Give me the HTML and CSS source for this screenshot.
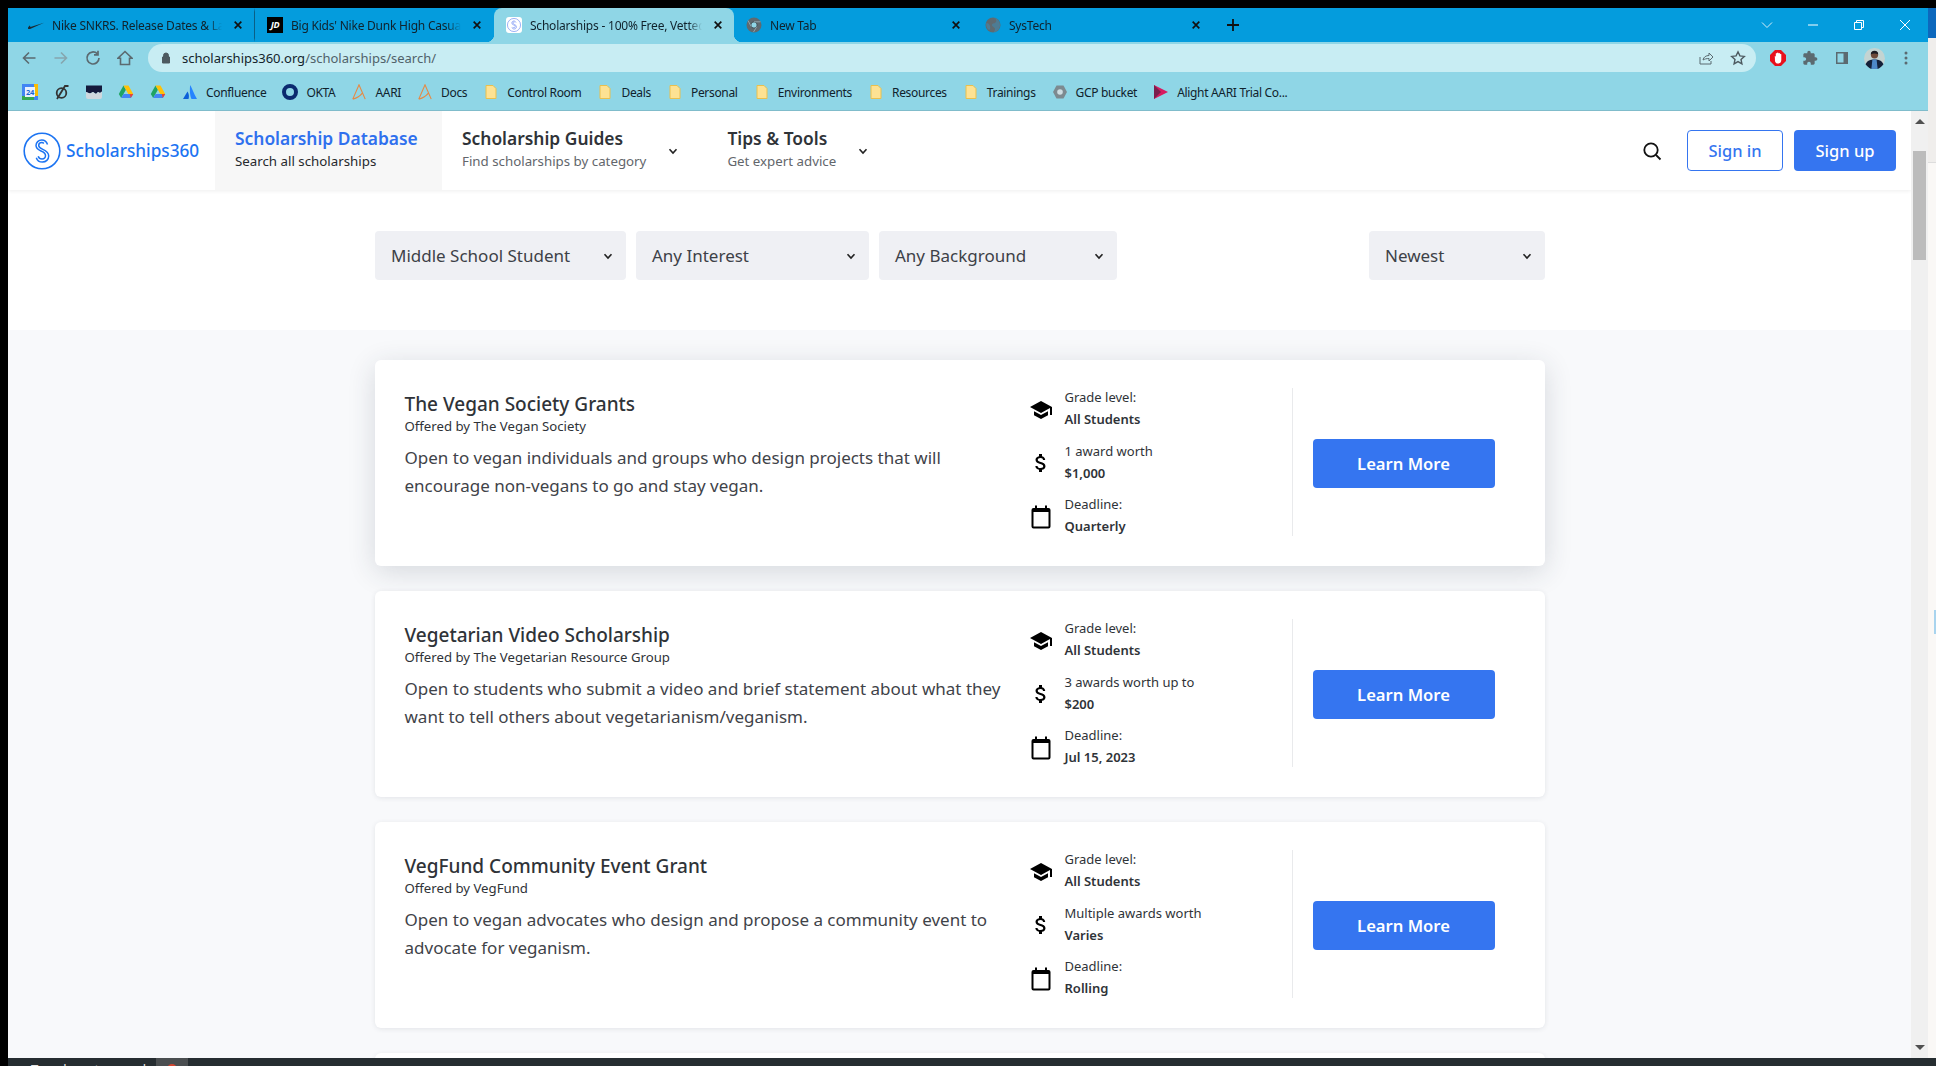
FILE: index.html
```html
<!DOCTYPE html>
<html lang="en">
<head>
  <meta charset="UTF-8" />
  <title>Scholarships - 100% Free, Vetted</title>
  <link rel="stylesheet" href="styles.css">
</head>
<body>

<svg class="defs" width="0" height="0" aria-hidden="true">
  <symbol id="i-close" viewBox="0 0 12 12"><path d="M2 2l8 8M10 2l-8 8" fill="none" stroke="currentColor" stroke-width="2"/></symbol>
  <symbol id="i-chev" viewBox="0 0 12 12"><path d="M2.500 4.200L6 8l3.500-3.800" fill="none" stroke="currentColor" stroke-width="1.600"/></symbol>
  <symbol id="i-folder" viewBox="0 0 16 16"><path d="M3 1.500h7l3 3v10H3z" fill="#fde293" stroke="#e9c04e" stroke-width="1"/></symbol>
  <symbol id="i-drive" viewBox="0 0 16 16"><path d="M5.500 1.500L.8 10l2.400 4 4.700-8.200z" fill="#1fa463"/><path d="M5.500 1.500h5l4.700 8.500H10.300z" fill="#ffc107"/><path d="M3.200 14h9.600l2.400-4H5.500z" fill="#4285f4"/><path d="M12.800 14l2.400-4h-3.500z" fill="#ea4335"/></symbol>
  <symbol id="i-aari" viewBox="0 0 16 18"><path d="M1 17L8 1l7 16M1 17c4-1 8-3 11-7" fill="none" stroke="#e58a45" stroke-width="1.300"/></symbol>
  <symbol id="i-s" viewBox="0 0 38 38"><circle cx="19" cy="19" r="17.800" fill="none" stroke="currentColor" stroke-width="1.600"/><path d="M24.500 12.500c-1-3-3.200-4.500-5.700-4.500-3.300 0-5.800 2.500-5.800 5.600 0 6.500 9.500 4.200 9.500 10 0 1.900-1.500 3.400-3.500 3.400-1.800 0-3.200-1-3.800-2.800M20.800 11.500c-.5-.7-1.200-1-2-1-1.800 0-3.100 1.300-3.100 3 0 4.700 10 3.100 10 10.600 0 3.500-2.800 6-6.200 6-2.900 0-5.300-1.600-6.200-4.400" fill="none" stroke="currentColor" stroke-width="1.500"/></symbol>
  <symbol id="i-school" viewBox="0 0 24 24"><path d="M5 13.180v4L12 21l7-3.820v-4L12 17l-7-3.820zM12 3L1 9l11 6 9-4.910V17h2V9L12 3z"/></symbol>
  <symbol id="i-money" viewBox="0 0 24 24"><path d="M11.800 10.900c-2.270-.59-3-1.200-3-2.150 0-1.090 1.010-1.850 2.700-1.850 1.780 0 2.440.85 2.500 2.100h2.210c-.07-1.720-1.120-3.300-3.210-3.810V3h-3v2.160c-1.940.42-3.500 1.680-3.500 3.610 0 2.310 1.910 3.460 4.700 4.130 2.500.6 3 1.480 3 2.410 0 .69-.49 1.790-2.700 1.790-2.060 0-2.870-.92-2.980-2.100h-2.200c.12 2.190 1.760 3.420 3.680 3.830V21h3v-2.150c1.950-.37 3.500-1.500 3.500-3.550 0-2.840-2.430-3.810-4.700-4.400z"/></symbol>
  <symbol id="i-cal" viewBox="0 0 24 24"><path d="M19.500 3H18V.5h-2V3H8V.5H6V3H4.500a2 2 0 0 0-2 2v16.500a2 2 0 0 0 2 2h15a2 2 0 0 0 2-2V5a2 2 0 0 0-2-2zm0 18.500h-15V7h15z"/></symbol>
</svg>

<div class="desktop">
  <div class="window">

    <div class="tabstrip">
      <div class="tab">
        <svg class="fav" viewBox="0 0 16 16"><path d="M0 11c-.2 1 .8 1.300 2 .9L16 5.800 4 9.600c-1.700.5-2.400-.1-1.900-1.400C.8 9.200.2 10.100 0 11z" fill="#1c2b33"/></svg>
        <span class="tab-title">Nike SNKRS. Release Dates &amp; Lau</span>
        <svg class="tab-x"><use href="#i-close"/></svg>
      </div>
      <div class="tab">
        <span class="fav jd">JD</span>
        <span class="tab-title">Big Kids' Nike Dunk High Casual</span>
        <svg class="tab-x"><use href="#i-close"/></svg>
      </div>
      <div class="tab active">
        <span class="fav fav-s"><svg width="14" height="14"><use href="#i-s"/></svg></span>
        <span class="tab-title">Scholarships - 100% Free, Vetted</span>
        <svg class="tab-x"><use href="#i-close"/></svg>
      </div>
      <div class="tab">
        <svg class="fav" viewBox="0 0 16 16"><circle cx="8" cy="8" r="7.500" fill="#5f6a70"/><circle cx="8" cy="8" r="3.200" fill="#8fd6e6" stroke="#3f4a50" stroke-width="1"/><path d="M8 4.800h6.500M5.200 9.600L2 3.500M10.800 9.600L7.500 15" stroke="#8fa3ac" stroke-width="1"/></svg>
        <span class="tab-title">New Tab</span>
        <svg class="tab-x"><use href="#i-close"/></svg>
      </div>
      <div class="tab">
        <svg class="fav" viewBox="0 0 16 16"><circle cx="8" cy="8" r="7.500" fill="#5f6a70"/><path d="M9 1c2.500 1 3 3 1.500 4.500S7 6 7 8s3 2 3 4-1 3-2 3.500c4-.2 7-3.500 7-7.500 0-3.400-2.500-6.400-6-7zM1.500 6c1.500 0 3 1 3.500 3s.5 3-1 4C2.300 11.700.5 9 1.500 6z" fill="#2f9fd8" opacity=".35"/></svg>
        <span class="tab-title">SysTech</span>
        <svg class="tab-x"><use href="#i-close"/></svg>
      </div>
      <svg class="new-tab" viewBox="0 0 12 12"><path d="M6 0v12M0 6h12" stroke="#111" stroke-width="1.800"/></svg>
      <div class="win-ctrls">
        <svg viewBox="0 0 12 12"><path d="M1 3.500l5 5 5-5" fill="none" stroke="#d8eef8" stroke-width="1"/></svg>
        <svg viewBox="0 0 12 12"><path d="M1 6h10" stroke="#fff" stroke-width="1"/></svg>
        <svg viewBox="0 0 12 12"><path d="M1.500 3.500h7v7h-7zM3.500 3.500v-2h7v7h-2" fill="none" stroke="#fff" stroke-width="1"/></svg>
        <svg viewBox="0 0 12 12"><path d="M1 1l10 10M11 1L1 11" stroke="#fff" stroke-width="1"/></svg>
      </div>
    </div>

    <div class="toolbar">
      <button class="tool"><svg viewBox="0 0 16 16"><path d="M14.500 8H2.500M8 2.500L2.500 8 8 13.500" fill="none" stroke="#5b6a70" stroke-width="1.600"/></svg></button>
      <button class="tool"><svg viewBox="0 0 16 16"><path d="M1.500 8h12M8 2.500L13.500 8 8 13.500" fill="none" stroke="#86a5ae" stroke-width="1.600"/></svg></button>
      <button class="tool"><svg viewBox="0 0 16 16"><path d="M14 8a6 6 0 1 1-1.800-4.300M13 .8v4H9" fill="none" stroke="#5b6a70" stroke-width="1.700"/></svg></button>
      <button class="tool"><svg viewBox="0 0 16 16"><path d="M8 1.500L1 8.200h2.500v6.300h9V8.200H15z" fill="none" stroke="#5b6a70" stroke-width="1.600"/></svg></button>
      <div class="omnibox">
        <svg class="lock" viewBox="0 0 12 12"><path d="M3.500 5V3.500a2.500 2.500 0 0 1 5 0V5M2.500 5h7v6h-7z" fill="#4d5a60" stroke="#4d5a60"/></svg>
        <span class="url"><b>scholarships360.org</b>/scholarships/search/</span>
        <button class="tool"><svg viewBox="0 0 16 16"><path d="M2 7v7h11v-3M5 10c.5-3 3-4.500 6-4.500V3l4 4-4 4V8.500C8.500 8.500 6.500 9 5 10z" fill="none" stroke="#5b6a70" stroke-width="1"/></svg></button>
        <button class="tool"><svg viewBox="0 0 16 16"><path d="M8 1.800l1.900 4.100 4.400.5-3.300 3 .9 4.400L8 11.600l-3.900 2.200.9-4.400-3.300-3 4.400-.5z" fill="none" stroke="#4d5a60" stroke-width="1.400"/></svg></button>
      </div>
      <div class="tool-end">
        <button class="tool"><svg viewBox="0 0 16 16"><path d="M5 0h6l5 5v6l-5 5H5l-5-5V5z" fill="#e8101c"/><path d="M4.800 6l1 .5V3.500a.7.7 0 0 1 1.200 0V3a.8.8 0 0 1 1.500 0v.4a.8.8 0 0 1 1.500 0v.8a.7.7 0 0 1 1.300 0V10c0 2.300-1.400 3.600-3.300 3.600-1.600 0-2.500-.9-3-2.300z" fill="#fff"/></svg></button>
        <button class="tool"><svg viewBox="0 0 24 24"><path d="M20.500 11H19V7c0-1.100-.9-2-2-2h-4V3.500C13 2.120 11.880 1 10.500 1S8 2.120 8 3.500V5H4c-1.100 0-1.990.9-1.990 2v3.800H3.500c1.490 0 2.700 1.210 2.700 2.700s-1.210 2.700-2.700 2.700H2V20c0 1.100.9 2 2 2h3.800v-1.500c0-1.490 1.210-2.700 2.700-2.700 1.490 0 2.700 1.210 2.700 2.700V22H17c1.100 0 2-.9 2-2v-4h1.500c1.380 0 2.500-1.120 2.500-2.500S21.880 11 20.500 11z" fill="#5b6a70"/></svg></button>
        <button class="tool"><svg viewBox="0 0 16 16"><path d="M2 2h12v12H2z" fill="#5b6a70"/><path d="M3.500 3.500h6v9h-6z" fill="#8fd6e6"/></svg></button>
        <button class="tool"><svg class="avatar" viewBox="0 0 20 20"><circle cx="10" cy="10" r="10" fill="#c4d4d2"/><path d="M1.500 15.500C3 12 6 11 10 11s7 1 8.500 4.500a10 10 0 0 1-17 0z" fill="#14213a"/><path d="M8 11h4l1 9H7z" fill="#4d88c7"/><circle cx="10" cy="6.500" r="3.500" fill="#6d4a39"/><path d="M6.500 6a3.500 3.500 0 0 1 7 0c-2-1-5-1-7 0z" fill="#1c1c22"/></svg></button>
        <button class="tool"><svg viewBox="0 0 16 16"><circle cx="8" cy="3" r="1.500" fill="#5b6a70"/><circle cx="8" cy="8" r="1.500" fill="#5b6a70"/><circle cx="8" cy="13" r="1.500" fill="#5b6a70"/></svg></button>
      </div>
    </div>

    <div class="bookmarks">
      <span class="bm"><svg viewBox="0 0 16 16"><path d="M0 0h16v16H0z" fill="#4285f4"/><path d="M12 0h4v12h-4z" fill="#fbbc04"/><path d="M0 12h12v4H0z" fill="#34a853"/><path d="M3 3h10v10H3z" fill="#e8f0fe"/><text x="8" y="11" font-size="7.500" font-weight="700" text-anchor="middle" fill="#1967d2" font-family="Noto Sans">24</text></svg></span>
      <span class="bm"><svg viewBox="0 0 16 16"><circle cx="7.500" cy="9" r="4.800" fill="none" stroke="#333" stroke-width="1.800"/><path d="M3 15L11 2h3.500" fill="none" stroke="#333" stroke-width="1.800"/></svg></span>
      <span class="bm"><svg viewBox="0 0 16 16"><path d="M0 1.500h16v6l-2 1.500-2-1-2 2-3-2-3 1.500-4-1.500z" fill="#141a3c"/><path d="M0 8l4 1.500 3-1.500 3 2 2-2 2 1 2-1.500V13a2 2 0 0 1-2 2H2a2 2 0 0 1-2-2z" fill="#cfd8de"/></svg></span>
      <span class="bm"><svg viewBox="0 0 16 16"><use href="#i-drive"/></svg></span>
      <span class="bm"><svg viewBox="0 0 16 16"><use href="#i-drive"/></svg></span>
      <span class="bm"><svg viewBox="0 0 16 16"><path d="M8.200 1c2 3.500 3.800 9 6.800 14H9.500C8 12 7.500 6 8.200 1z" fill="#2684ff"/><path d="M5.500 7.500L1 15h5.500c.8-2 .5-5.500-1-7.500z" fill="#0b5fd8"/></svg>Confluence</span>
      <span class="bm"><svg viewBox="0 0 16 16"><circle cx="8" cy="8" r="6" fill="none" stroke="#0b2a6f" stroke-width="4"/></svg>OKTA</span>
      <span class="bm"><svg viewBox="0 0 16 18"><use href="#i-aari"/></svg>AARI</span>
      <span class="bm"><svg viewBox="0 0 16 18"><use href="#i-aari"/></svg>Docs</span>
      <span class="bm"><svg viewBox="0 0 16 16"><use href="#i-folder"/></svg>Control Room</span>
      <span class="bm"><svg viewBox="0 0 16 16"><use href="#i-folder"/></svg>Deals</span>
      <span class="bm"><svg viewBox="0 0 16 16"><use href="#i-folder"/></svg>Personal</span>
      <span class="bm"><svg viewBox="0 0 16 16"><use href="#i-folder"/></svg>Environments</span>
      <span class="bm"><svg viewBox="0 0 16 16"><use href="#i-folder"/></svg>Resources</span>
      <span class="bm"><svg viewBox="0 0 16 16"><use href="#i-folder"/></svg>Trainings</span>
      <span class="bm"><svg viewBox="0 0 16 16"><path d="M4.500 1.500h7L15 8l-3.500 6.500h-7L1 8z" fill="#7d8a90"/><circle cx="8" cy="8" r="2.800" fill="#cfdde2"/></svg>GCP bucket</span>
      <span class="bm"><svg viewBox="0 0 16 16"><path d="M1 1l14 7-14 7z" fill="#d81b60"/><path d="M1 1l7 7-7 7z" fill="#7a1f4d"/></svg>Alight AARI Trial Co...</span>
    </div>

    <div class="viewport">
      <div class="site">
        <header class="site-head">
          <a class="logo">
            <svg width="38" height="38"><use href="#i-s"/></svg>
            <span>Scholarships360</span>
          </a>
          <div class="nav-item current">
            <div>
              <div class="nav-title">Scholarship Database</div>
              <div class="nav-sub">Search all scholarships</div>
            </div>
          </div>
          <div class="nav-item">
            <div>
              <div class="nav-title">Scholarship Guides</div>
              <div class="nav-sub">Find scholarships by category</div>
            </div>
            <svg class="chev"><use href="#i-chev"/></svg>
          </div>
          <div class="nav-item">
            <div>
              <div class="nav-title">Tips &amp; Tools</div>
              <div class="nav-sub">Get expert advice</div>
            </div>
            <svg class="chev"><use href="#i-chev"/></svg>
          </div>
          <div class="head-right">
            <svg class="search" viewBox="0 0 20 20"><circle cx="9" cy="9" r="6.700" fill="none" stroke="#111" stroke-width="1.800"/><path d="M14 14l4.500 4.500" stroke="#111" stroke-width="1.800"/></svg>
            <button class="btn-in">Sign in</button>
            <button class="btn-up">Sign up</button>
          </div>
        </header>

        <section class="filters">
          <div class="select w-level">Middle School Student<svg class="chev"><use href="#i-chev"/></svg></div>
          <div class="select w-interest">Any Interest<svg class="chev"><use href="#i-chev"/></svg></div>
          <div class="select w-background">Any Background<svg class="chev"><use href="#i-chev"/></svg></div>
          <div class="select w-sort">Newest<svg class="chev"><use href="#i-chev"/></svg></div>
        </section>

        <section class="results">
          <article class="card hovered">
            <div class="card-body">
              <h3>The Vegan Society Grants</h3>
              <p class="offered">Offered by The Vegan Society</p>
              <p class="desc">Open to vegan individuals and groups who design projects that will encourage non-vegans to go and stay vegan.</p>
            </div>
            <div class="card-info">
              <div class="info-row"><svg><use href="#i-school"/></svg><div><span>Grade level:</span><b>All Students</b></div></div>
              <div class="info-row"><svg><use href="#i-money"/></svg><div><span>1 award worth</span><b>$1,000</b></div></div>
              <div class="info-row"><svg><use href="#i-cal"/></svg><div><span>Deadline:</span><b>Quarterly</b></div></div>
            </div>
            <div class="card-action"><button>Learn More</button></div>
          </article>

          <article class="card">
            <div class="card-body">
              <h3>Vegetarian Video Scholarship</h3>
              <p class="offered">Offered by The Vegetarian Resource Group</p>
              <p class="desc">Open to students who submit a video and brief statement about what they want to tell others about vegetarianism/veganism.</p>
            </div>
            <div class="card-info">
              <div class="info-row"><svg><use href="#i-school"/></svg><div><span>Grade level:</span><b>All Students</b></div></div>
              <div class="info-row"><svg><use href="#i-money"/></svg><div><span>3 awards worth up to</span><b>$200</b></div></div>
              <div class="info-row"><svg><use href="#i-cal"/></svg><div><span>Deadline:</span><b>Jul 15, 2023</b></div></div>
            </div>
            <div class="card-action"><button>Learn More</button></div>
          </article>

          <article class="card">
            <div class="card-body">
              <h3>VegFund Community Event Grant</h3>
              <p class="offered">Offered by VegFund</p>
              <p class="desc">Open to vegan advocates who design and propose a community event to advocate for veganism.</p>
            </div>
            <div class="card-info">
              <div class="info-row"><svg><use href="#i-school"/></svg><div><span>Grade level:</span><b>All Students</b></div></div>
              <div class="info-row"><svg><use href="#i-money"/></svg><div><span>Multiple awards worth</span><b>Varies</b></div></div>
              <div class="info-row"><svg><use href="#i-cal"/></svg><div><span>Deadline:</span><b>Rolling</b></div></div>
            </div>
            <div class="card-action"><button>Learn More</button></div>
          </article>

          <article class="card card-empty"></article>
        </section>
      </div>

      <div class="scrollbar">
        <span class="arrow-up"></span>
        <span class="thumb"></span>
        <span class="arrow-down"></span>
      </div>
    </div>
  </div>

  <div class="behind">
    <div class="behind-top"></div>
    <div class="behind-mark"></div>
  </div>
</div>

<footer class="taskbar">
  <span class="task-search">Type here to search</span>
  <span class="task-app"><i></i></span>
</footer>

</body>
</html>
```

FILE: styles.css
```css
:root {
  --blue: #3575f0;
  --strip: #049cdd;
  --bar: #8fd6e6;
  --ink: #2f3338;
}

* {
  box-sizing: border-box;
}

html, body {
  height: 100%;
}

body {
  margin: 0;
  padding: 8px 0 0 0;
  background-color: #000;
  font-family: 'Noto Sans', sans-serif;
  display: flex;
  flex-direction: column;
  overflow: hidden;
}

button {
  font-family: inherit;
  border: none;
  background: none;
  padding: 0;
  cursor: pointer;
}

.defs {
  position: absolute;
}

.desktop {
  flex: 1;
  min-height: 0;
  display: flex;
  padding-left: 8px;
}

.window {
  width: 1920px;
  display: flex;
  flex-direction: column;
  min-height: 0;
}

/* tabs */
.tabstrip {
  height: 34px;
  background-color: var(--strip);
  display: flex;
  align-items: stretch;
  padding-left: 8px;
  flex-shrink: 0;
}

.tab {
  position: relative;
  width: 239px;
  display: flex;
  align-items: center;
  gap: 8px;
  padding: 0 8px 0 12px;
  border-right: 1px solid #0a5f86;
  border-top: 4px solid transparent;
  border-bottom: 4px solid transparent;
  background-clip: padding-box;
  font-size: 12px;
  letter-spacing: -0.22px;
  color: #10222c;
}

.tab:nth-child(2),
.tab:nth-child(4) {
  border-right-color: transparent;
}

.tab:nth-child(5) {
  border-right: none;
}

.tab.active {
  background-color: var(--bar);
  border: none;
  border-radius: 8px 8px 0 0;
  width: 240px;
}

.tab.active::before,
.tab.active::after {
  content: "";
  position: absolute;
  bottom: 0;
  width: 8px;
  height: 8px;
}

.tab.active::before {
  left: -8px;
  background: radial-gradient(circle at 0 0, transparent 8px, var(--bar) 8.500px);
}

.tab.active::after {
  right: -8px;
  background: radial-gradient(circle at 100% 0, transparent 8px, var(--bar) 8.500px);
}

.fav {
  width: 16px;
  height: 16px;
  flex-shrink: 0;
}

.jd {
  background-color: #000;
  color: #fff;
  font-size: 9px;
  font-weight: 700;
  font-style: italic;
  line-height: 16px;
  text-align: center;
}

.fav-s {
  background-color: #fff;
  border-radius: 3px;
  color: #5b7cf0;
  display: flex;
  align-items: center;
  justify-content: center;
}

.tab-title {
  flex: 1;
  min-width: 0;
  white-space: nowrap;
  -webkit-mask-image: linear-gradient(to right, #000 92%, transparent);
  mask-image: linear-gradient(to right, #000 92%, transparent);
}

.tab-x {
  width: 10px;
  height: 10px;
  flex-shrink: 0;
  margin: 0 3px;
  color: #111;
}

.new-tab {
  width: 12px;
  height: 12px;
  align-self: center;
  margin-left: 15px;
}

.win-ctrls {
  margin-left: auto;
  display: flex;
  align-items: center;
}

.win-ctrls svg {
  width: 46px;
  height: 12px;
}

/* toolbar */
.toolbar {
  height: 32px;
  background-color: var(--bar);
  display: flex;
  align-items: center;
  padding: 0 6px 0 5px;
  flex-shrink: 0;
}

.tool {
  width: 32px;
  height: 28px;
  display: flex;
  align-items: center;
  justify-content: center;
  flex-shrink: 0;
}

.tool svg {
  width: 16px;
  height: 16px;
}

.tool .avatar {
  width: 21px;
  height: 21px;
}

.omnibox {
  flex: 1;
  height: 28px;
  margin: 0 6px 0 7px;
  background-color: #c8edf3;
  border-radius: 14px;
  display: flex;
  align-items: center;
  padding: 0 2px 0 12px;
}

.lock {
  width: 12px;
  height: 12px;
  margin-right: 10px;
}

.url {
  flex: 1;
  font-size: 13px;
  color: #50626a;
}

.url b {
  font-weight: 400;
  color: #14242c;
}

.tool-end {
  display: flex;
}

/* bookmarks */
.bookmarks {
  height: 37px;
  background-color: var(--bar);
  border-bottom: 1px solid #80bccb;
  display: flex;
  align-items: center;
  gap: 16px;
  padding-left: 14px;
  font-size: 12px;
  letter-spacing: -0.32px;
  color: #10222c;
  flex-shrink: 0;
}

.bm {
  display: flex;
  align-items: center;
  gap: 8px;
  white-space: nowrap;
}

.bm svg {
  width: 16px;
  height: 16px;
}

/* site */
.viewport {
  flex: 1;
  min-height: 0;
  display: flex;
}

.site {
  flex: 1;
  min-width: 0;
  background-color: #f8f9fb;
  overflow: hidden;
}

.site-head {
  position: relative;
  height: 79px;
  background-color: #fff;
  display: flex;
  align-items: stretch;
  padding-right: 15px;
  box-shadow: 0 1px 4px rgba(0, 0, 0, 0.07);
}

.logo {
  width: 207px;
  display: flex;
  align-items: center;
  gap: 5px;
  padding-left: 15px;
  color: #1c74f2;
  font-size: 17.200px;
  font-weight: 500;
}

.nav-item {
  display: flex;
  align-items: center;
  padding: 0 28px 4px 20px;
}

.nav-item.current {
  width: 227px;
  background-color: #f7f7f7;
}

.nav-title {
  font-size: 17.400px;
  font-weight: 600;
  line-height: 24px;
  color: var(--ink);
  white-space: nowrap;
}

.current .nav-title {
  color: #2f70ee;
}

.nav-sub {
  margin-top: 2px;
  font-size: 13.300px;
  line-height: 19px;
  color: #62666b;
  white-space: nowrap;
}

.current .nav-sub {
  color: #26292d;
}

.chev {
  width: 12px;
  height: 12px;
  flex-shrink: 0;
  color: #222;
}

.nav-item .chev {
  margin: 4px 0 0 21px;
}

.head-right {
  margin-left: auto;
  display: flex;
  align-items: center;
}

.search {
  width: 20px;
  height: 20px;
  margin-right: 25px;
}

.btn-in,
.btn-up {
  height: 41px;
  border-radius: 4px;
  font-size: 16.500px;
  font-weight: 500;
}

.btn-in {
  width: 96px;
  margin-right: 11px;
  border: 1px solid var(--blue);
  background-color: #fff;
  color: var(--blue);
}

.btn-up {
  width: 102px;
  background-color: var(--blue);
  color: #fff;
}

.filters {
  height: 140px;
  padding-top: 41px;
  background-color: #fff;
  display: flex;
  justify-content: flex-start;
  gap: 10px;
  width: 100%;
  padding-left: 367px;
  padding-right: 366px;
}

.select {
  height: 49px;
  padding: 0 12px 0 16px;
  display: flex;
  align-items: center;
  justify-content: space-between;
  background-color: #eff0f4;
  border-radius: 4px;
  font-size: 17px;
  color: #3d4147;
  white-space: nowrap;
}

.w-level { width: 251px; }
.w-interest { width: 233px; }
.w-background { width: 238px; }
.w-sort { width: 176px; margin-left: auto; }

/* cards */
.results {
  width: 1170px;
  margin: 0 auto;
  padding-top: 30px;
}

.card {
  height: 206px;
  margin-bottom: 25px;
  padding: 28px 50px 30px 30px;
  display: flex;
  background-color: #fff;
  border-radius: 6px;
  box-shadow: 0 1px 5px rgba(40, 50, 70, 0.1);
}

.card.hovered {
  box-shadow: 0 6px 28px rgba(40, 50, 70, 0.16);
}

.card-body {
  width: 624px;
  padding: 4px 20px 0 0;
  color: var(--ink);
}

.card-body h3 {
  margin: 0;
  font-size: 19px;
  font-weight: 500;
  line-height: 24px;
}

.offered {
  margin: 1px 0 0;
  font-size: 13.200px;
  line-height: 18px;
}

.desc {
  margin: 9px 0 0;
  font-size: 17px;
  line-height: 28px;
  color: #3f4349;
}

.card-info {
  width: 264px;
  display: flex;
  flex-direction: column;
  gap: 13.500px;
  border-right: 1px solid #e9eaec;
}

.info-row {
  height: 40px;
  display: flex;
  align-items: center;
  gap: 12px;
  font-size: 13px;
  line-height: 18px;
  color: var(--ink);
}

.info-row svg {
  width: 24px;
  height: 24px;
  flex-shrink: 0;
  margin-top: 3px;
}

.info-row div {
  display: flex;
  flex-direction: column;
  gap: 4px;
}

.info-row b {
  font-weight: 600;
}

.card-action {
  flex: 1;
  display: flex;
  align-items: center;
  justify-content: flex-end;
  padding-top: 3px;
}

.card-action button {
  width: 182px;
  height: 49px;
  border-radius: 4px;
  background-color: var(--blue);
  color: #fff;
  font-size: 16.600px;
  font-weight: 600;
}

/* scrollbar */
.scrollbar {
  width: 17px;
  background-color: #f0f0f0;
  display: flex;
  flex-direction: column;
  align-items: center;
  padding: 8px 0;
  flex-shrink: 0;
}

.arrow-up,
.arrow-down {
  width: 0;
  height: 0;
  border-left: 5px solid transparent;
  border-right: 5px solid transparent;
}

.arrow-up {
  border-bottom: 5px solid #505050;
}

.arrow-down {
  border-top: 5px solid #505050;
  margin-top: auto;
}

.thumb {
  width: 13px;
  height: 109px;
  margin-top: 27px;
  background-color: #bcbcbc;
}

/* window behind */
.behind {
  flex: 1;
  background-color: #faf8f6;
  display: flex;
  flex-direction: column;
}

.behind-top {
  height: 155px;
  background: linear-gradient(#0d68bd 0, #0d68bd 30px, #f0eeec 30px);
  border-bottom: 1px solid #ddd;
}

.behind-mark {
  width: 2px;
  height: 24px;
  margin: 447px 0 0 6px;
  background-color: #a9d4ee;
}

.taskbar {
  height: 8px;
  margin-left: 8px;
  background-color: #262d31;
  display: flex;
  overflow: hidden;
  flex-shrink: 0;
}

.task-search {
  width: 148px;
  padding: 4px 0 0 23px;
  font-size: 13px;
  line-height: 14px;
  color: #e6e6e6;
  white-space: nowrap;
}

.task-app {
  width: 32px;
  background-color: #4a4e50;
  display: flex;
  justify-content: center;
}

.task-app i {
  width: 10px;
  height: 10px;
  margin-top: 6px;
  border-radius: 50%;
  background-color: #d4442f;
}
```
